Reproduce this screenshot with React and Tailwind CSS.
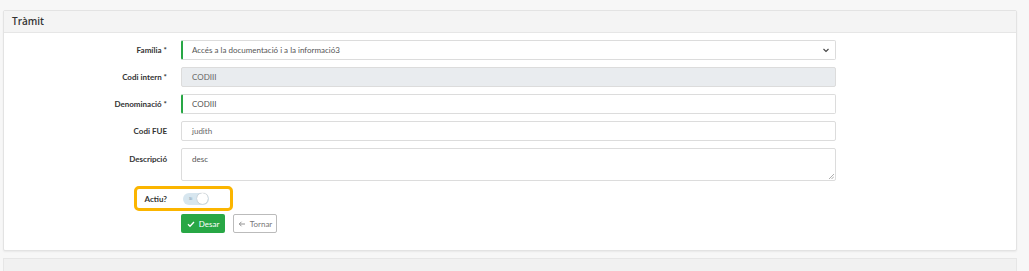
import { useState } from "react";

const font = { fontFamily: 'Lato, "Noto Sans", sans-serif' };

function Row({ label, children, top = false, last = false }) {
  return (
    <div className={`flex ${top ? "items-start" : "items-center"} ${last ? "mb-[5px]" : "mb-[7px]"}`}>
      <div
        className={`w-[177px] pr-[14px] text-right text-[8px] font-bold text-[#333] ${
          top ? "pt-[5px]" : ""
        }`}
      >
        {label}
      </div>
      <div className="w-[655px]">{children}</div>
    </div>
  );
}

export default function App() {
  const [actiu, setActiu] = useState(true);

  return (
    <div className="w-[1029px] h-[271px] overflow-hidden bg-[#f7f7f7] pt-[10px] pl-[3px]" style={font}>
      <div className="w-[1014px] bg-white border border-[#e3e3e3] rounded-[2px] shadow-[0_1px_2px_rgba(0,0,0,0.06)]">
        <div className="h-[22px] bg-[#f4f4f4] border-b border-[#e6e6e6] px-[8px] flex items-center text-[10px] font-semibold text-[#333]" style={{ fontFamily: '"Open Sans", sans-serif' }}>
          Tràmit
        </div>
        <div className="pt-[7px] pb-[17px]">
          <Row label="Família *">
            <div className="h-[20px] border border-[#dcdcdc] border-l-2 border-l-[#28a745] rounded-[2px] flex items-center justify-between pl-[9px] pr-[5px] text-[8px] text-[#555]">
              <span>Accés a la documentació i a la informació3</span>
              <svg width="8" height="8" viewBox="0 0 16 16" fill="none" stroke="#444" strokeWidth="2.2">
                <path d="M3 6l5 5 5-5" />
              </svg>
            </div>
          </Row>
          <Row label="Codi intern *">
            <div className="h-[20px] border border-[#dcdcdc] bg-[#e9ecef] rounded-[2px] flex items-center pl-[10px] text-[8px] text-[#666]">
              CODIII
            </div>
          </Row>
          <Row label="Denominació *">
            <div className="h-[20px] border border-[#dcdcdc] border-l-2 border-l-[#28a745] rounded-[2px] flex items-center pl-[9px] text-[8px] text-[#555]">
              CODIII
            </div>
          </Row>
          <Row label="Codi FUE">
            <div className="h-[20px] border border-[#dcdcdc] rounded-[2px] flex items-center pl-[10px] text-[8px] text-[#666]">
              judith
            </div>
          </Row>
          <Row label="Descripció" top last>
            <div className="relative h-[33px] border border-[#dcdcdc] rounded-[2px] pl-[10px] pt-[4px] text-[8px] text-[#555]">
              desc
              <svg className="absolute right-[1px] bottom-[1px]" width="6" height="6" viewBox="0 0 6 6" stroke="#999" strokeWidth="0.8">
                <path d="M6 1L1 6M6 3.5L3.5 6" />
              </svg>
            </div>
          </Row>
          <div className="flex items-center mb-[3px]">
            <div className="ml-[130px] h-[25px] w-[99px] border-[3px] border-[#fbb500] rounded-[5px] flex items-center">
              <div className="w-[30px] text-right text-[8px] font-bold text-[#333]">Actiu?</div>
              <button
                onClick={() => setActiu(!actiu)}
                className="ml-[16px] w-[26px] h-[12px] rounded-full bg-[#d7e6ef] flex items-center justify-between pl-[6px] pr-[1px]"
              >
                <span className="text-[4px] text-[#6a8ea5] leading-none">Si</span>
                <span className="w-[11px] h-[11px] rounded-full bg-white shadow-[0_0_1px_rgba(0,0,0,0.4)]" />
              </button>
            </div>
          </div>
          <div className="flex items-center ml-[177px] gap-[8px]">
            <button className="h-[19px] w-[44px] bg-[#28a745] rounded-[2px] flex items-center justify-center gap-[4px] text-[8px] text-white">
              <svg width="8" height="8" viewBox="0 0 16 16" fill="none" stroke="white" strokeWidth="2.6">
                <path d="M2 8.5l4 4L14 4" />
              </svg>
              Desar
            </button>
            <button className="h-[19px] w-[44px] bg-white border border-[#bbb] rounded-[2px] flex items-center justify-center gap-[4px] text-[8px] text-[#777]">
              <svg width="8" height="8" viewBox="0 0 16 16" fill="none" stroke="#777" strokeWidth="1.6">
                <path d="M14 8H3M7 3.5L2.5 8 7 12.5" />
              </svg>
              Tornar
            </button>
          </div>
        </div>
      </div>
      <div className="mt-[7px] w-[1014px] h-[20px] bg-[#f1f1f1] border border-[#e6e6e6]" />
    </div>
  );
}
